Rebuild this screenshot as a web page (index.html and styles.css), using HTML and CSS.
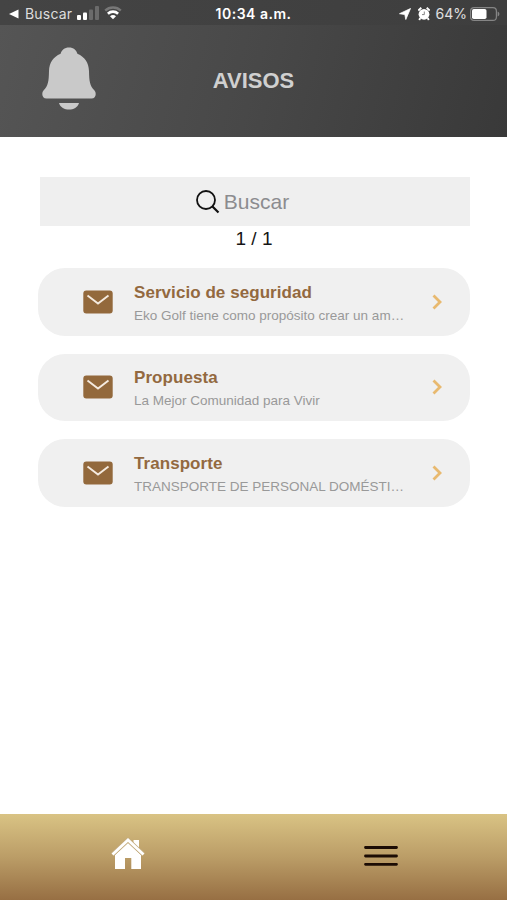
FILE: index.html
```html
<!DOCTYPE html>
<html lang="es">
<head>
  <meta charset="UTF-8">
  <meta name="viewport" content="width=device-width, initial-scale=1.0">
  <title>Avisos</title>
  <link rel="stylesheet" href="styles.css">
</head>
<body>
  <div class="status-bar">
    <div class="status-left">
      <svg width="10" height="10" viewBox="0 0 10 10"><path d="M0 5L9.500 0.500V9.500Z" fill="#fff"/></svg>
      <span class="back-app">Buscar</span>
      <svg class="signal" width="22" height="14" viewBox="0 0 22 14">
        <rect x="0" y="9" width="4" height="5" rx="1" fill="#fff"/>
        <rect x="6" y="6.500" width="4" height="7.500" rx="1" fill="#fff"/>
        <rect x="12" y="3.500" width="4" height="10.500" rx="1" fill="#6b6b6b"/>
        <rect x="18" y="0" width="4" height="14" rx="1" fill="#6b6b6b"/>
      </svg>
      <svg class="wifi" width="18" height="14" viewBox="0 0 18 14" fill="none">
        <path d="M1.200 4.600C5.500 0.400 12.500 0.400 16.800 4.600" stroke="#777" stroke-width="2.400"/>
        <path d="M3.900 7.700C6.800 4.900 11.200 4.900 14.100 7.700" stroke="#fff" stroke-width="2.600"/>
        <path d="M6 10.200C7.700 8.600 10.300 8.600 12 10.200L9 13.300Z" fill="#fff"/>
      </svg>
    </div>
    <div class="clock">10:34 a.m.</div>
    <div class="status-right">
      <svg width="12" height="12" viewBox="0 0 12 12"><path d="M11.500 0.500L6.800 11.500L5.800 6.500L0.500 5.700Z" fill="#fff" stroke="#fff" stroke-width="0.800" stroke-linejoin="round"/></svg>
      <svg class="alarm" width="12" height="14" viewBox="0 0 12 14">
        <path d="M0.300 3.600L3.300 0.800M11.700 3.600L8.700 0.800M2.300 11L1.200 13M9.700 11L10.800 13" stroke="#fff" stroke-width="1.900"/>
        <circle cx="6" cy="7.300" r="5.400" fill="#fff"/>
        <path d="M6.300 4.500V7.600H4" stroke="#777" stroke-width="0.900" fill="none"/>
      </svg>
      <span class="battery-level">64%</span>
      <svg width="30" height="14" viewBox="0 0 30 14">
        <rect x="0.600" y="0.600" width="25.800" height="12.800" rx="3.500" fill="none" stroke="#858585" stroke-width="1.200"/>
        <rect x="2" y="2" width="14.500" height="10" rx="1.800" fill="#fff"/>
        <path d="M27.600 4.500C30 5.500 30 8.500 27.600 9.500Z" fill="#858585"/>
      </svg>
    </div>
  </div>

  <header>
    <svg class="bell" width="54" height="64" viewBox="0 0 54 64" fill="#c9c9c9">
      <path d="M27 0.500C22.500 0.500 19.500 3.200 18.600 6.800C11 10 7.300 16 7 24C6.800 34 6.200 39 1.500 43.500C-0.900 46.200 0.300 51.500 4.500 51.500H49.500C53.700 51.500 54.900 46.200 52.500 43.500C47.800 39 47.200 34 47 24C46.700 16 43 10 35.400 6.800C34.500 3.200 31.500 0.500 27 0.500Z"/>
      <path d="M17 56H37C34.500 64.800 19.500 64.800 17 56Z"/>
    </svg>
    <h1>AVISOS</h1>
  </header>

  <main>
    <div class="search">
      <svg width="24" height="24" viewBox="0 0 24 24" fill="none" stroke="#111" stroke-width="1.800">
        <circle cx="10" cy="10" r="9"/>
        <path d="M16.500 16.500L22.500 22.500" stroke-width="2.200"/>
      </svg>
      <span>Buscar</span>
    </div>
    <div class="pages">1 / 1</div>

    <div class="notice-list">
      <div class="notice">
        <svg class="mail" width="30" height="24" viewBox="0 0 30 24">
          <rect x="0.300" y="0.500" width="29.400" height="23" rx="3" fill="#93693c"/>
          <path d="M4.500 5.500L15 13.500L25.500 5.500" fill="none" stroke="#f5ebe0" stroke-width="1.900"/>
        </svg>
        <div class="notice-text">
          <h2>Servicio de seguridad</h2>
          <p>Eko Golf tiene como propósito crear un am…</p>
        </div>
        <svg class="arrow" width="10" height="16" viewBox="0 0 10 16"><path d="M1.500 1.500L8 8L1.500 14.500" fill="none" stroke="#e8b96f" stroke-width="2.800"/></svg>
      </div>
      <div class="notice">
        <svg class="mail" width="30" height="24" viewBox="0 0 30 24">
          <rect x="0.300" y="0.500" width="29.400" height="23" rx="3" fill="#93693c"/>
          <path d="M4.500 5.500L15 13.500L25.500 5.500" fill="none" stroke="#f5ebe0" stroke-width="1.900"/>
        </svg>
        <div class="notice-text">
          <h2>Propuesta</h2>
          <p>La Mejor Comunidad para Vivir</p>
        </div>
        <svg class="arrow" width="10" height="16" viewBox="0 0 10 16"><path d="M1.500 1.500L8 8L1.500 14.500" fill="none" stroke="#e8b96f" stroke-width="2.800"/></svg>
      </div>
      <div class="notice">
        <svg class="mail" width="30" height="24" viewBox="0 0 30 24">
          <rect x="0.300" y="0.500" width="29.400" height="23" rx="3" fill="#93693c"/>
          <path d="M4.500 5.500L15 13.500L25.500 5.500" fill="none" stroke="#f5ebe0" stroke-width="1.900"/>
        </svg>
        <div class="notice-text">
          <h2>Transporte</h2>
          <p>TRANSPORTE DE PERSONAL DOMÉSTI…</p>
        </div>
        <svg class="arrow" width="10" height="16" viewBox="0 0 10 16"><path d="M1.500 1.500L8 8L1.500 14.500" fill="none" stroke="#e8b96f" stroke-width="2.800"/></svg>
      </div>
    </div>
  </main>

  <nav>
    <a class="tab home" href="#">
      <svg width="34" height="32" viewBox="0 0 34 32">
        <path d="M22.500 2H28V14L22.500 9Z" fill="#fff"/>
        <path d="M17 5L30 17V31H20.300V20H14V31H4V17Z" fill="#fff"/>
        <path d="M1.500 16.500L17 2L32.500 16.500" fill="none" stroke="#c4ad80" stroke-width="4.400"/>
        <path d="M1.500 16.500L17 2L32.500 16.500" fill="none" stroke="#fff" stroke-width="2.800"/>
      </svg>
    </a>
    <a class="tab menu" href="#">
      <svg width="34" height="22" viewBox="0 0 34 22"><path d="M1.500 2.500H32.500M1.500 11H32.500M1.500 19.300H32.500" stroke="#1c0c04" stroke-width="2.800" stroke-linecap="round"/></svg>
    </a>
  </nav>
</body>
</html>
```
FILE: styles.css
```css
* { box-sizing: border-box; margin: 0; padding: 0; }
body {
  display: flex;
  flex-direction: column;
  height: 100vh;
  overflow: hidden;
  background-color: #fff;
  font-family: "Liberation Sans", Arial, sans-serif;
}
svg { display: block; flex-shrink: 0; }

/* Status bar */
.status-bar {
  display: grid;
  grid-template-columns: 1fr auto 1fr;
  align-items: center;
  height: 25px;
  padding: 2px 7px 0 9px;
  background: linear-gradient(90deg, #444, #3e3e3e);
  color: #fff;
  font-family: Inter, sans-serif;
  font-size: 14px;
  line-height: 22px;
}
.status-left, .status-right { display: flex; align-items: center; }
.status-right { justify-content: flex-end; }
.back-app { margin-left: 6px; color: #ddd; letter-spacing: 0.2px; }
.signal { margin-left: 5px; margin-top: -2px; }
.wifi { margin-left: 5px; margin-top: -1px; }
.clock { margin-right: 2px; font-weight: 600; letter-spacing: 0.5px; }
.alarm { margin: 0 6px 0 7px; }
.battery-level { margin-right: 3px; color: #e0e0e0; }

header {
  display: grid;
  grid-template-columns: 1fr auto 1fr;
  align-items: center;
  height: 112px;
  padding-left: 42px;
  background: linear-gradient(105deg, #555, #484848 50%, #393939);
}
header::after { content: ""; }
header h1 { margin-left: -42px; color: #d0d0d0; font-size: 22px; line-height: 26px; }
.bell { margin-top: -4px; }

main { flex: 1; padding: 40px 37px 0 38px; }
.search {
  display: flex;
  align-items: center;
  justify-content: center;
  height: 49px;
  margin: 0 0 0 2px;
  padding-right: 25px;
  background-color: #efefef;
  color: #8c8c8f;
  font-size: 21px;
}
.search span { margin-left: 4px; }
.pages { height: 42px; line-height: 26px; color: #151515; font-size: 19px; text-align: center; }

/* Notices */
.notice-list { display: flex; flex-direction: column; gap: 18px; }
.notice {
  display: flex;
  align-items: center;
  height: 67.600px;
  padding: 0 28px 0 45px;
  border-radius: 27px;
  background-color: #f0f0f0;
}
.notice-text { flex: 1; margin-left: 21px; padding-top: 4px; white-space: nowrap; }
.notice-text h2 { color: #93693f; font-size: 17px; line-height: 23px; letter-spacing: 0.060px; }
.notice-text p { color: #999; font-size: 13.500px; line-height: 23px; }

nav {
  display: flex;
  height: 86px;
  background: linear-gradient(#d9c384, #bb9d67 50%, #976f43);
}
.tab { flex: 1; display: flex; justify-content: center; }
.home { padding: 24px 0 0 2px; }
.menu { padding: 31px 0 0 2px; }
```
